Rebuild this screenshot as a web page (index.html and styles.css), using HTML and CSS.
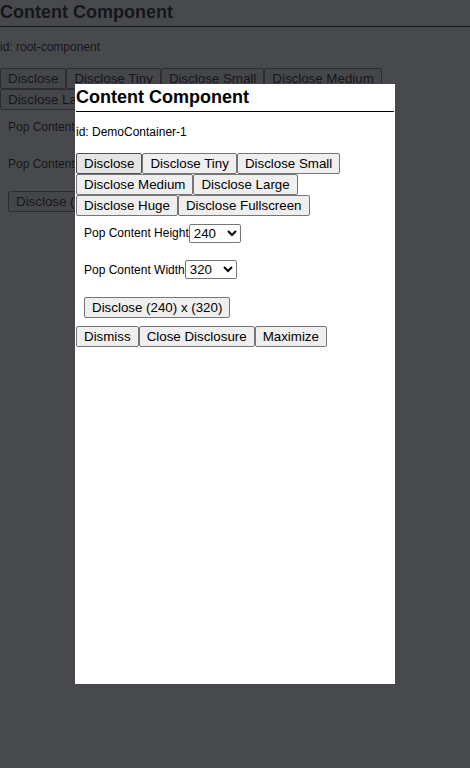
FILE: index.html
```html
<!DOCTYPE html>
<html>
<head>
<meta charset="utf-8">
<link rel="stylesheet" href="styles.css">
</head>
<body>
<div class="comp">
  <h2 class="title">Content Component</h2>
  <p class="ident">id: root-component</p>
  <div class="btns"><button>Disclose</button><button>Disclose Tiny</button><button>Disclose Small</button><button>Disclose Medium</button><button>Disclose Large</button><button>Disclose Huge</button><button>Disclose Fullscreen</button></div>
  <div class="form">
    <div class="row"><label>Pop Content Height</label><select class="sel"><option>240</option></select></div>
    <div class="row"><label>Pop Content Width</label><select class="sel"><option>320</option></select></div>
    <button>Disclose (240) x (320)</button>
  </div>
</div>
<div class="overlay"></div>
<div class="modal">
  <div class="comp">
    <h2 class="title">Content Component</h2>
    <p class="ident">id: DemoContainer-1</p>
    <div class="btns"><button class="hot">Disclose</button><button>Disclose Tiny</button><button>Disclose Small</button><button>Disclose Medium</button><button>Disclose Large</button><button>Disclose Huge</button><button>Disclose Fullscreen</button></div>
    <div class="form">
      <div class="row"><label>Pop Content Height</label><select class="sel"><option>240</option></select></div>
      <div class="row"><label>Pop Content Width</label><select class="sel"><option>320</option></select></div>
      <button>Disclose (240) x (320)</button>
    </div>
    <div class="btns"><button>Dismiss</button><button>Close Disclosure</button><button>Maximize</button></div>
  </div>
</div>
</body>
</html>
```
FILE: styles.css
```css
html, body {
  margin: 0;
  padding: 0;
  background: #fff;
  font-family: "Liberation Sans", Arial, sans-serif;
  color: #000;
}
.title {
  margin: 0;
  font-size: 18px;
  font-weight: bold;
  line-height: 21px;
  padding-top: 2px;
  padding-bottom: 3px;
  border-bottom: 1px solid #000;
}
.ident {
  margin: 13px 0 14px;
  font-size: 12px;
  line-height: 14px;
}
.btns {
  display: flex;
  flex-wrap: wrap;
}
button {
  font-family: "Liberation Sans", Arial, sans-serif;
  font-size: 13.333px;
  height: 21px;
  padding: 1px 7px;
  margin: 0;
  background: #efefef;
  border: 1px solid #767676;
  border-radius: 2px;
  color: #000;
}
button.hot {
  background: #e5e5e5;
  border-color: #4f4f4f;
}
.form {
  padding: 8px;
  display: flex;
  flex-direction: column;
  align-items: flex-start;
  gap: 18px;
}
.row {
  display: flex;
  align-items: center;
  height: 18.5px;
}
.row label {
  font-size: 12px;
}
.sel {
  font-family: "Liberation Sans", Arial, sans-serif;
  font-size: 13.333px;
  width: 52px;
  height: 19px;
  margin: 0;
  border: 1px solid #767676;
  border-radius: 2px;
  background: #fff;
  color: #000;
}
.overlay {
  position: fixed;
  inset: 0;
  background: rgba(26, 28, 32, 0.8);
}
.modal {
  position: fixed;
  left: 75px;
  top: 84px;
  width: 318px;
  height: 598px;
  border: 1px solid #fff;
  background: #fff;
}
```
